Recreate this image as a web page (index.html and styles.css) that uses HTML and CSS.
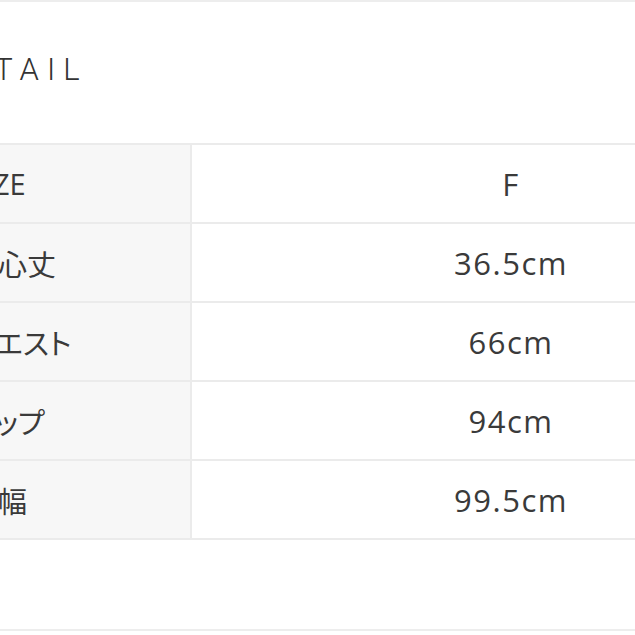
FILE: index.html
```html
<!DOCTYPE html>
<html lang="ja">
<head>
<meta charset="utf-8">
<title>DETAIL</title>
<link rel="stylesheet" href="styles.css">
</head>
<body>
<div class="page">
  <section class="detail">
    <h2 class="title">DETAIL</h2>
    <table class="spec">
      <colgroup><col class="col-label"><col class="col-value"></colgroup>
      <tr><th>SIZE</th><td>F</td></tr>
      <tr><th>中心丈</th><td>36.5cm</td></tr>
      <tr><th>ウエスト</th><td>66cm</td></tr>
      <tr><th>ヒップ</th><td>94cm</td></tr>
      <tr><th>裾幅</th><td>99.5cm</td></tr>
    </table>
  </section>
  <div class="next"></div>
</div>
</body>
</html>
```

FILE: styles.css
```css
html, body {
  margin: 0;
  padding: 0;
  background: #fff;
  overflow: hidden;
}
body {
  width: 635px;
  height: 635px;
  color: #333;
  font-family: "Open Sans", "Noto Sans CJK JP", sans-serif;
}
.page {
  margin-left: -60px;
  width: 1000px;
  border-top: 2px solid #ededed;
}
.title {
  margin: 50px 0 0;
  font-family: Roboto, "Liberation Sans", sans-serif;
  font-weight: 300;
  font-size: 31px;
  line-height: 36px;
  letter-spacing: 8px;
  color: #333;
}
.spec {
  margin-top: 55px;
  border-collapse: collapse;
  table-layout: fixed;
  width: 890px;
}
.col-label { width: 250px; }
.col-value { width: 640px; }
.spec th,
.spec td {
  border: 2px solid #ebebeb;
  height: 77px;
  padding: 0;
  font-weight: 400;
  color: #3a3a3a;
}
.spec th {
  text-align: left;
  padding-left: 27px;
  font-size: 29px;
  background: #f7f7f7;
  font-feature-settings: "palt";
}
.spec td {
  text-align: center;
  font-size: 31px;
  letter-spacing: 1.5px;
  background: #fff;
}
.next {
  margin-top: 89px;
  border-top: 2px solid #ededed;
}
```
